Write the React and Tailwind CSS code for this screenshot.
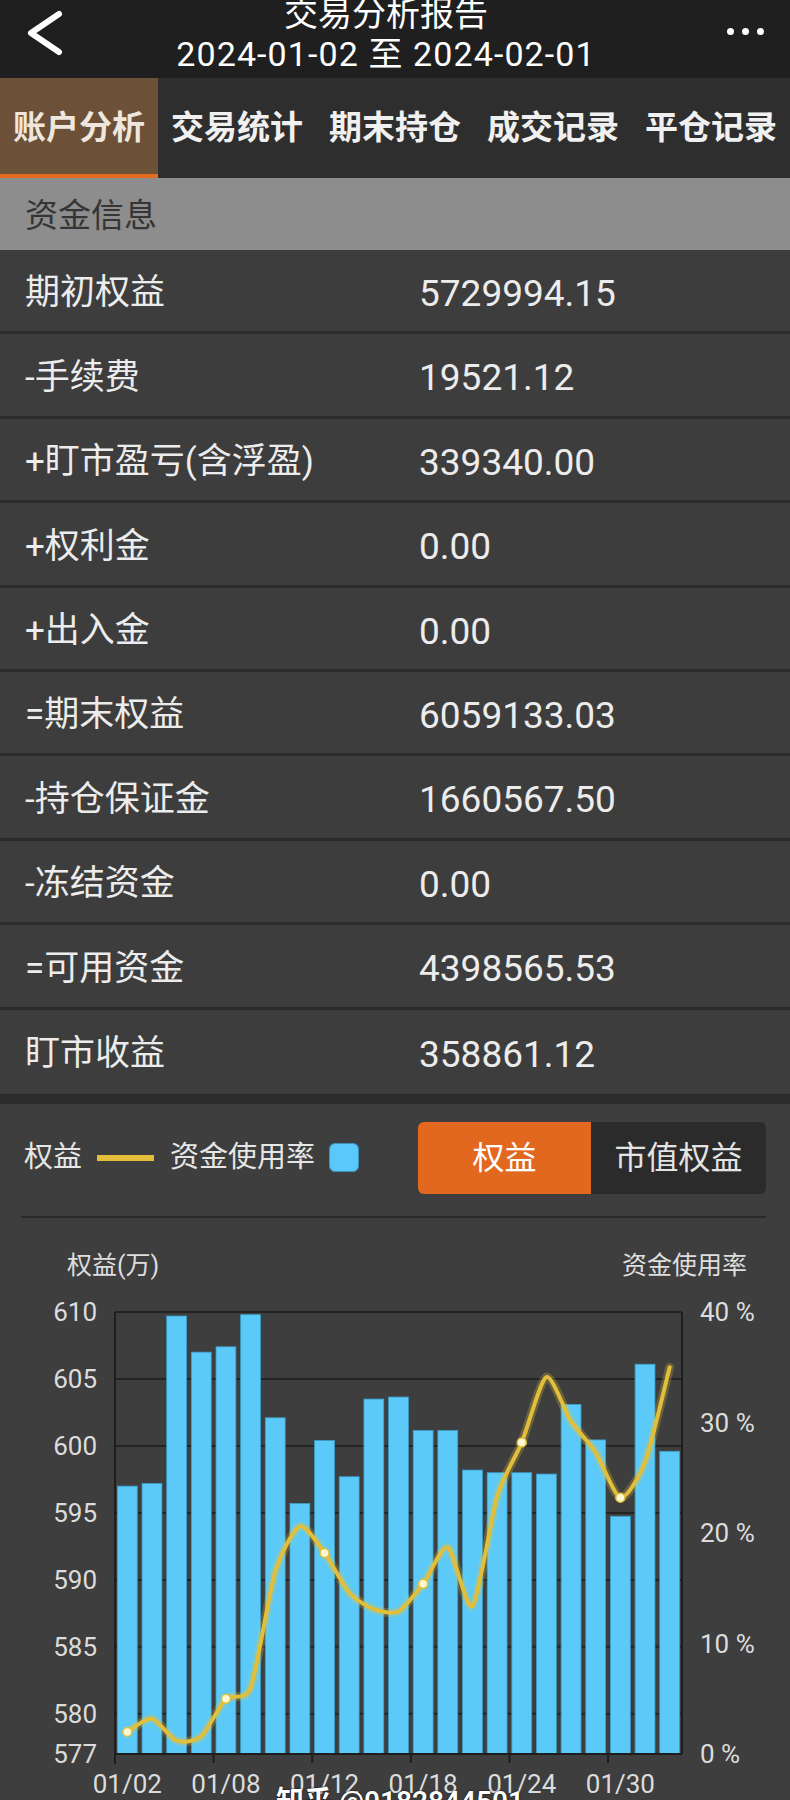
import React from 'react';

const rows = [
  ['期初权益', '5729994.15'],
  ['-手续费', '19521.12'],
  ['+盯市盈亏(含浮盈)', '339340.00'],
  ['+权利金', '0.00'],
  ['+出入金', '0.00'],
  ['=期末权益', '6059133.03'],
  ['-持仓保证金', '1660567.50'],
  ['-冻结资金', '0.00'],
  ['=可用资金', '4398565.53'],
  ['盯市收益', '358861.12'],
];

const tabs = ['账户分析', '交易统计', '期末持仓', '成交记录', '平仓记录'];

// 权益 (万) per trading day
const equity = [
  597.0, 597.2, 609.7, 607.0, 607.4, 609.8, 602.1, 595.7, 600.4, 597.7, 603.5, 603.65,
  601.15, 601.15, 598.2, 598.0, 598.0, 597.9, 603.1, 600.45, 594.75, 606.1, 599.6,
];

// 资金使用率 (%)
const usage = [
  2.0, 3.2, 1.2, 1.6, 5.0, 6.0, 16.5, 20.6, 18.2, 14.6, 13.1, 12.9, 15.4, 18.7, 13.4, 23.3,
  28.2, 34.1, 30.1, 27.3, 23.2, 26.4, 35.0,
];

const X0 = 115;
const X1 = 682;
const TOP = 22;
const BOTTOM = 464;
const SLOT = (X1 - X0) / equity.length;

const yEq = (v) => BOTTOM - ((v - 577) * (BOTTOM - TOP)) / 33;
const yPct = (p) => BOTTOM - (p / 40) * (BOTTOM - TOP);
const cx = (i) => X0 + (i + 0.5) * SLOT;

function smoothPath(pts) {
  const k = 0.12;
  let d = `M${pts[0][0]},${pts[0][1]}`;
  for (let i = 0; i < pts.length - 1; i++) {
    const p0 = pts[i - 1] || pts[i];
    const p1 = pts[i];
    const p2 = pts[i + 1];
    const p3 = pts[i + 2] || p2;
    const c1x = p1[0] + (p2[0] - p0[0]) * k;
    const c1y = p1[1] + (p2[1] - p0[1]) * k;
    const c2x = p2[0] - (p3[0] - p1[0]) * k;
    const c2y = p2[1] - (p3[1] - p1[1]) * k;
    d += ` C${c1x.toFixed(1)},${c1y.toFixed(1)} ${c2x.toFixed(1)},${c2y.toFixed(1)} ${p2[0].toFixed(1)},${p2[1].toFixed(1)}`;
  }
  return d;
}

function Chart() {
  const pts = usage.map((p, i) => [cx(i), yPct(p)]);
  const line = smoothPath(pts);
  const ticks = [0, 4, 8, 12, 16, 20];
  const xLabels = ['01/02', '01/08', '01/12', '01/18', '01/24', '01/30'];

  return (
    <svg width="790" height="510" viewBox="0 0 790 510" className="block">
      {[610, 605, 600, 595, 590, 585, 580].map((v) => (
        <line key={v} x1={X0} x2={X1} y1={yEq(v)} y2={yEq(v)} stroke="#242424" strokeWidth="2" />
      ))}

      {equity.map((v, i) => (
        <rect
          key={i}
          x={X0 + i * SLOT + 2.4}
          y={yEq(v)}
          width={SLOT - 4.8}
          height={BOTTOM - yEq(v)}
          fill="#5ccaf8"
          stroke="#3b9fcb"
          strokeWidth="0.8"
        />
      ))}

      <line x1={X0} x2={X0} y1={TOP} y2={BOTTOM + 10} stroke="#1e1e1e" strokeWidth="2" />
      <line x1={X1} x2={X1} y1={TOP} y2={BOTTOM} stroke="#1e1e1e" strokeWidth="2" />
      <line x1={X0} x2={X1} y1={BOTTOM} y2={BOTTOM} stroke="#1e1e1e" strokeWidth="2" />
      {ticks.map((t) => (
        <line key={t} x1={X0 + t * SLOT} x2={X0 + t * SLOT} y1={BOTTOM} y2={BOTTOM + 9} stroke="#1e1e1e" strokeWidth="2" />
      ))}

      <path d={line} fill="none" stroke="#e8c43c" strokeOpacity="0.25" strokeWidth="9" strokeLinejoin="round" strokeLinecap="round" />
      <path d={line} fill="none" stroke="#e2bf3a" strokeWidth="4" strokeLinejoin="round" strokeLinecap="round" />
      {ticks.map((t) => (
        <circle key={t} cx={pts[t][0]} cy={pts[t][1]} r="4.5" fill="#fdf7d2" stroke="#e2bf3a" strokeWidth="1.5" />
      ))}

      {[610, 605, 600, 595, 590, 585, 580, 577].map((v) => (
        <text key={v} x="97" y={yEq(v) + 9} textAnchor="end" fontSize="26" fill="#dcdcdc">
          {v}
        </text>
      ))}
      {[40, 30, 20, 10, 0].map((p) => (
        <text key={p} x="700" y={yPct(p) + 9} fontSize="26" fill="#dcdcdc">
          {p} %
        </text>
      ))}
      {ticks.map((t, i) => (
        <text key={t} x={cx(t)} y="503" textAnchor="middle" fontSize="26" fill="#dcdcdc">
          {xLabels[i]}
        </text>
      ))}
    </svg>
  );
}

export default function App() {
  return (
    <div className="relative h-[1800px] w-[790px] overflow-hidden bg-[#3c3c3c] font-['Roboto','Noto_Sans_CJK_SC',sans-serif] text-[#ececec]">
      {/* header */}
      <div className="relative flex h-[78px] flex-col items-center bg-[#1f1f1f] pr-[18px]">
        <svg className="absolute left-[22px] top-[8px]" width="48" height="50" viewBox="0 0 48 50">
          <path d="M37 6 L9 25 L37 44" fill="none" stroke="#fff" strokeWidth="6" strokeLinecap="round" strokeLinejoin="round" />
        </svg>
        <div className="absolute right-[26px] top-[28px] flex gap-[8px]">
          <span className="h-[7px] w-[7px] rounded-full bg-white" />
          <span className="h-[7px] w-[7px] rounded-full bg-white" />
          <span className="h-[7px] w-[7px] rounded-full bg-white" />
        </div>
        <div className="mt-[-4px] text-[34px] leading-[36px] text-white">交易分析报告</div>
        <div className="mt-[2px] text-[34px] leading-[40px] tracking-[1.1px] text-white">2024-01-02 至 2024-02-01</div>
      </div>

      {/* tabs */}
      <div className="grid h-[100px] grid-cols-5 bg-[#2e2e2e]">
        {tabs.map((t, i) => (
          <div
            key={t}
            className={
              i === 0
                ? 'flex items-center justify-center border-b-4 border-[#e46a1f] bg-[#6c5138] pt-[4px] text-[33px] font-bold text-[#efe7de]'
                : 'flex items-center justify-center text-[33px] font-bold text-[#f0f0f0]'
            }
          >
            {t}
          </div>
        ))}
      </div>

      {/* section title */}
      <div className="flex h-[72px] items-center bg-[#8d8d8d] pl-[25px] pt-[3px] text-[33px] text-[#353535]">资金信息</div>

      {/* rows */}
      {rows.map(([label, value], i) => (
        <div
          key={label}
          className={
            i === rows.length - 1
              ? 'flex h-[84.4px] items-center bg-[#3d3d3d] pt-[6px]'
              : 'flex h-[84.4px] items-center border-b-[3px] border-[#2b2b2b] bg-[#3d3d3d] pt-[6px]'
          }
        >
          <div className="w-[419px] pl-[25px] text-[35px]">{label}</div>
          <div className="text-[37px]">{value}</div>
        </div>
      ))}
      <div className="h-[10px] bg-[#2b2b2b]" />

      {/* chart section */}
      <div className="bg-[#3e3e3e] pt-[18px]">
        <div className="flex items-center justify-between pl-[24px] pr-[24px]">
          <div className="flex items-center text-[29px] text-[#e6e6e6]">
            <span>权益</span>
            <span className="ml-[15px] mr-[16px] h-[6px] w-[57px] bg-[#e5bf3b]" />
            <span>资金使用率</span>
            <span className="ml-[14px] h-[29px] w-[30px] rounded-[6px] border border-[#3a93bb] bg-[#5ac8fa]" />
          </div>
          <div className="flex h-[72px] w-[348px] overflow-hidden rounded-[6px]">
            <div className="flex w-[173px] items-center justify-center bg-[#e2681f] text-[32px] text-white">权益</div>
            <div className="flex flex-1 items-center justify-center bg-[#2b2b2b] text-[32px] text-[#e4e4e4]">市值权益</div>
          </div>
        </div>
        <div className="ml-[21px] mr-[24px] mt-[22px] h-[2px] bg-[#2a2a2a]" />
        <div className="flex h-[72px] items-center justify-between pl-[67px] pr-[43px] pt-[24px] text-[25px] text-[#dedede]">
          <span>权益(万)</span>
          <span>资金使用率</span>
        </div>
        <Chart />
      </div>

      <div className="absolute left-[276px] top-[1786px] text-[28px] font-semibold leading-[32px] text-white [text-shadow:0_0_2px_#000]">
        知乎 @0182844501
      </div>
    </div>
  );
}
